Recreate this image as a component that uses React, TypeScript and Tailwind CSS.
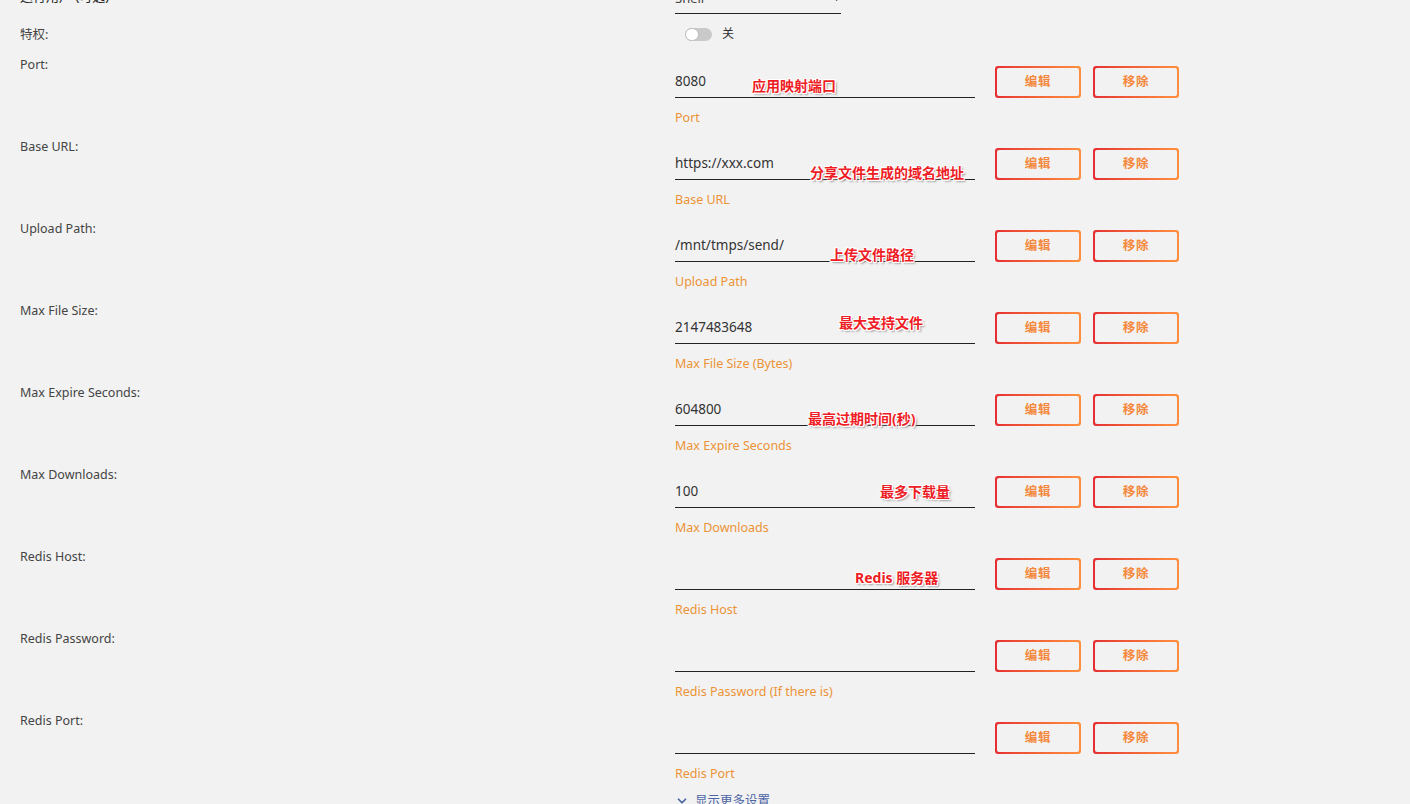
import { ChevronDown } from 'lucide-react';

type Field = {
    label: string;
    value: string;
    hint: string;
    note?: string;
    noteLeft?: number;
    noteTop?: number;
};

const fields: Field[] = [
    { label: 'Port:', value: '8080', hint: 'Port', note: '应用映射端口', noteLeft: 77, noteTop: 10 },
    { label: 'Base URL:', value: 'https://xxx.com', hint: 'Base URL', note: '分享文件生成的域名地址', noteLeft: 135, noteTop: 15 },
    { label: 'Upload Path:', value: '/mnt/tmps/send/', hint: 'Upload Path', note: '上传文件路径', noteLeft: 155, noteTop: 15 },
    { label: 'Max File Size:', value: '2147483648', hint: 'Max File Size (Bytes)', note: '最大支持文件', noteLeft: 164, noteTop: 1 },
    { label: 'Max Expire Seconds:', value: '604800', hint: 'Max Expire Seconds', note: '最高过期时间(秒)', noteLeft: 133, noteTop: 15 },
    { label: 'Max Downloads:', value: '100', hint: 'Max Downloads', note: '最多下载量', noteLeft: 205, noteTop: 6 },
    { label: 'Redis Host:', value: '', hint: 'Redis Host', note: 'Redis 服务器', noteLeft: 180, noteTop: 10 },
    { label: 'Redis Password:', value: '', hint: 'Redis Password (If there is)' },
    { label: 'Redis Port:', value: '', hint: 'Redis Port' },
];

function GradientButton({ text }: { text: string }) {
    return (
        <div className="w-[86px] h-[32px] rounded-[3px] p-[2px] bg-gradient-to-r from-[#e52d32] to-[#ff8f3e]">
            <div className="w-full h-full rounded-[2px] bg-[#f2f2f2] flex items-center justify-center text-[12.5px] font-bold text-[#f5883c] tracking-[0.05em]">
                {text}
            </div>
        </div>
    );
}

function FieldRow({ f }: { f: Field }) {
    return (
        <div className="flex h-[82px]">
            <div className="w-[675px] pl-5 pt-px text-[12.5px] leading-[14px] text-[#444]">{f.label}</div>
            <div className="pt-[9px]">
                <div className="flex items-start">
                    <div className="relative w-[300px] h-[32px] border-b border-[#222] flex items-center text-[13.5px] text-[#333]">
                        {f.value}
                        {f.note && (
                            <span
                                className="absolute whitespace-nowrap text-[14px] leading-[20px] font-bold text-[#ee1c25] [text-shadow:1px_1px_0_#fff,-1px_-1px_0_#fff,1px_-1px_0_#fff,-1px_1px_0_#fff,0_1px_0_#fff,0_-1px_0_#fff,2px_2px_2px_#999]"
                                style={{ left: f.noteLeft, top: f.noteTop }}
                            >
                                {f.note}
                            </span>
                        )}
                    </div>
                    <div className="ml-5 flex gap-3">
                        <GradientButton text="编辑" />
                        <GradientButton text="移除" />
                    </div>
                </div>
                <div className="mt-[13px] text-[12.5px] leading-[14px] text-[#ec9236]">{f.hint}</div>
            </div>
        </div>
    );
}

export default function App() {
    return (
        <div className="min-h-screen bg-[#f2f2f2] overflow-hidden font-['Noto_Sans','Noto_Sans_CJK_SC',sans-serif]">
            {/* row cut off by the top edge */}
            <div className="flex -mt-[13px] h-[40px]">
                <div className="w-[675px] pl-5 pt-[2px] text-[13px] leading-[14px] text-[#222]">运行用户 (可选)</div>
                <div className="w-[166px] h-[27px] border-b border-[#222] flex items-start justify-between pt-[3px] text-[13px] leading-[16px] text-[#444]">
                    <span>Shell</span>
                    <span className="text-[9px] leading-[16px] text-[#222]">▼</span>
                </div>
            </div>
            {/* privileged toggle */}
            <div className="flex h-[30px]">
                <div className="w-[675px] pl-5 pt-[1px] text-[12.5px] leading-[14px] text-[#444]">特权:</div>
                <div className="flex items-center h-[14px] pl-[10px] gap-[10px]">
                    <div className="relative w-[27px] h-[13px] rounded-full bg-[#c9c9c9]">
                        <div className="absolute left-0 top-0 w-[14px] h-[13px] rounded-full bg-white border border-[#bdbdbd]" />
                    </div>
                    <span className="text-[12px] text-[#333]">关</span>
                </div>
            </div>
            {fields.map((f) => (
                <FieldRow key={f.label} f={f} />
            ))}
            <div className="flex">
                <div className="w-[675px]" />
                <div className="flex items-center gap-[6px] -mt-[1px] text-[12.5px] leading-[14px] text-[#4b64a6]">
                    <ChevronDown className="w-[14px] h-[14px]" strokeWidth={3} />
                    显示更多设置
                </div>
            </div>
        </div>
    );
}
